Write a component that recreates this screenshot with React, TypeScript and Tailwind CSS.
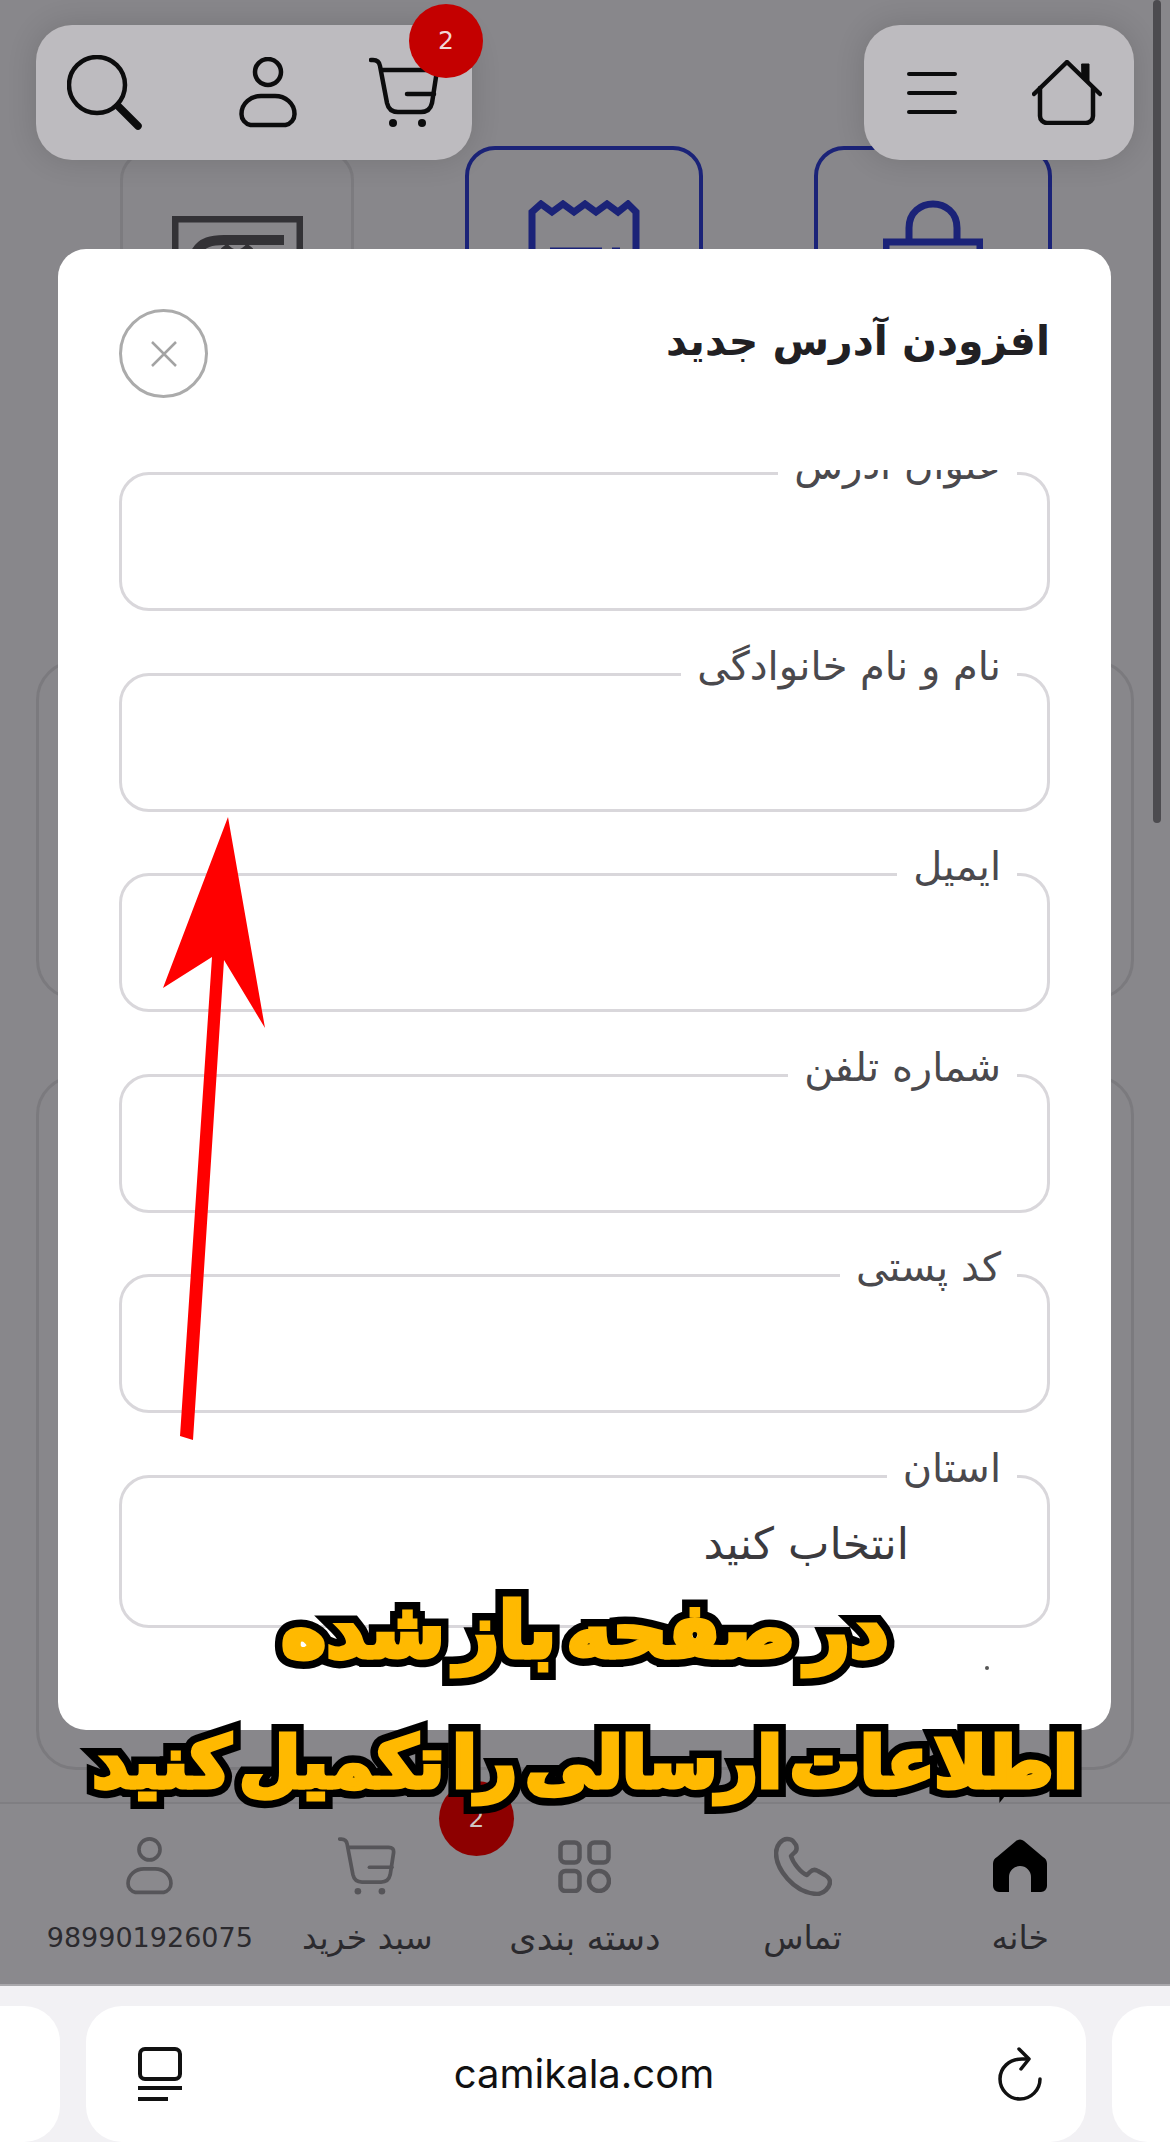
import React from "react";

const persian = "font-['DejaVu_Sans',sans-serif]";

type IconProps = { className?: string };

const SearchIcon: React.FC<IconProps> = ({ className }) => (
  <svg viewBox="0 0 75 75" fill="none" stroke="currentColor" className={className}>
    <circle cx="30" cy="30" r="28" strokeWidth="4.5" />
    <path d="M51 51 L71 71" strokeWidth="7.5" strokeLinecap="round" />
  </svg>
);

const UserIcon: React.FC<IconProps> = ({ className }) => (
  <svg viewBox="0 0 58 71" fill="none" stroke="currentColor" strokeWidth="4.5" className={className}>
    <circle cx="29" cy="15" r="13" />
    <path d="M2.5 57 C2.5 46 12 39 22 39 H36 C46 39 55.5 46 55.5 57 a11 11 0 0 1 -9 11 H11.5 a11 11 0 0 1 -9 -11 z" />
  </svg>
);

const CartIcon: React.FC<IconProps> = ({ className }) => (
  <svg viewBox="0 0 70 71" fill="none" stroke="currentColor" strokeWidth="4.5" strokeLinecap="round" className={className}>
    <path d="M2 3 h2 q6 0 7 6 L18 46 q2 9 11 9 H52 q9 0 11 -9 L67 20 q1 -7 -6 -7 H13" />
    <path d="M38 37 H65" />
    <circle cx="24" cy="66" r="4" fill="currentColor" stroke="none" />
    <circle cx="53" cy="66" r="4" fill="currentColor" stroke="none" />
  </svg>
);

const HomeOutline: React.FC<IconProps> = ({ className }) => (
  <svg viewBox="0 0 70 65" fill="none" stroke="currentColor" strokeWidth="4.5" strokeLinecap="round" strokeLinejoin="round" className={className}>
    <path d="M2 34 L35 2 L68 34" />
    <path d="M8 28 V56 a7 7 0 0 0 7 7 H54 a7 7 0 0 0 7 -7 V28" />
    <path d="M50 4 H57 V22 L50 15 Z" fill="currentColor" strokeWidth="1" />
  </svg>
);

const GridIcon: React.FC<IconProps> = ({ className }) => (
  <svg viewBox="0 0 53 53" fill="none" stroke="currentColor" strokeWidth="4.5" className={className}>
    <rect x="2.5" y="2.5" width="19" height="20" rx="5" />
    <rect x="31.5" y="2.5" width="19" height="20" rx="5" />
    <rect x="2.5" y="31" width="19" height="20" rx="5" />
    <circle cx="41" cy="41" r="10" />
  </svg>
);

const PhoneIcon: React.FC<IconProps> = ({ className }) => (
  <svg viewBox="0 0 58 60" fill="none" stroke="currentColor" strokeWidth="4.5" strokeLinejoin="round" className={className}>
    <path d="M13 3 C8 3 2 9 2 17 C2 32 19 57 43 58 C50 58 56 51 56 46 C56 43 54 41 51 39 L44 35 C41 33 38 34 36 36 L33 39 C27 37 19 27 17 20 L20 17 C23 15 23 12 22 9 L19 5 C17 3 15 3 13 3 Z" />
  </svg>
);

const HomeSolid: React.FC<IconProps> = ({ className }) => (
  <svg viewBox="0 0 54 54" fill="currentColor" className={className}>
    <path d="M23 2 a6 6 0 0 1 8 0 L50 18 a8 8 0 0 1 4 7 V47 a6 6 0 0 1 -6 6 H38 V38 a11 11 0 0 0 -22 0 V53 H6 a6 6 0 0 1 -6 -6 V25 a8 8 0 0 1 4 -7 Z" />
  </svg>
);

const Field: React.FC<{ label: string; children?: React.ReactNode; tall?: boolean }> = ({ label, children, tall }) => (
  <div className={`relative shrink-0 rounded-[30px] border-[3px] border-[#d9d7db] ${tall ? "h-[153px]" : "h-[139px]"}`}>
    <span className="absolute right-[30px] top-[-39px] bg-white px-[16px] text-[40px] leading-[58px] text-[#4a494d]">
      {label}
    </span>
    {children}
  </div>
);

const navItems = [
  { label: "989901926075", text: "text-[27px]", icon: <UserIcon className="h-[58px] w-[47px] text-[#565559]" /> },
  { label: "سبد خرید", text: "text-[33px]", icon: <CartIcon className="h-[60px] w-[58px] text-[#565559]" /> },
  { label: "دسته بندی", text: "text-[35px]", icon: <GridIcon className="h-[53px] w-[53px] text-[#565559]" /> },
  { label: "تماس", text: "text-[33px]", icon: <PhoneIcon className="h-[60px] w-[58px] text-[#565559]" /> },
  { label: "خانه", text: "text-[33px]", icon: <HomeSolid className="h-[54px] w-[54px] text-black" /> },
];

const fields = ["عنوان آدرس", "نام و نام خانوادگی", "ایمیل", "شماره تلفن", "کد پستی"];

export default function App() {
  return (
    <div className={`relative flex h-[2142px] w-[1170px] flex-col overflow-hidden bg-[#88878b] ${persian}`}>
      {/* page behind the dialog */}
      <main className="h-[1802px] shrink-0 overflow-hidden pt-[146px]">
        <div className="ml-[120px] flex gap-[111px]">
          <div className="mt-[4px] flex h-[396px] w-[234px] justify-center rounded-[30px] border-[3px] border-[#7c7b7f] pt-[63px]">
            <svg viewBox="0 0 131 60" fill="none" stroke="#333236" className="h-[60px] w-[131px]">
              <rect x="3" y="3" width="125" height="80" strokeWidth="7" />
              <path d="M24 36 C30 26 40 24 52 24 H112" strokeWidth="10" />
              <path d="M52 30 C60 40 70 40 78 30" strokeWidth="8" />
            </svg>
          </div>
          <div className="flex h-[400px] w-[238px] justify-center rounded-[30px] border-4 border-[#1b2378] pt-[50px]">
            <svg viewBox="0 0 112 60" fill="none" stroke="#1b2378" strokeWidth="7" className="h-[60px] w-[112px]">
              <path d="M4 60 V12 L13 4 L24 12 L35 4 L46 12 L57 4 L68 12 L79 4 L90 12 L100 4 L108 12 V60" />
              <path d="M22 50 H74 M84 50 H92" strokeWidth="5" />
            </svg>
          </div>
          <div className="flex h-[400px] w-[238px] justify-center rounded-[30px] border-4 border-[#1b2378] pt-[50px]">
            <svg viewBox="0 0 100 60" fill="none" stroke="#1b2378" strokeWidth="7" className="h-[60px] w-[100px]">
              <path d="M26 42 V28 C26 -4 74 -4 74 28 V42" />
              <path d="M3 60 V42 H97 V60" />
            </svg>
          </div>
        </div>
        <div className="mx-[36px] mt-[114px] h-[340px] rounded-[40px] border-[3px] border-[#7b7a7e]" />
        <div className="mx-[36px] mt-[75px] h-[695px] rounded-[40px] border-[3px] border-[#7b7a7e]" />
      </main>

      {/* bottom navigation */}
      <nav className="flex h-[182px] shrink-0 border-t-2 border-[#7f7e82] bg-[#8a898d] px-[41px] pt-[30px]">
        {navItems.map((item) => (
          <div key={item.label} className="flex w-[217.6px] flex-col items-center">
            <div className="flex h-[64px] items-center justify-center">{item.icon}</div>
            <span dir="rtl" className={`mt-[18px] whitespace-nowrap leading-[44px] text-[#2b2a2e] ${item.text}`}>
              {item.label}
            </span>
          </div>
        ))}
      </nav>

      {/* browser bar */}
      <div className="flex h-[158px] shrink-0 items-end gap-[26px] border-t-2 border-[#a9a8ac] bg-[#f2f1f4]">
        <div className="h-[136px] w-[60px] shrink-0 rounded-r-[36px] bg-white" />
        <div className="flex h-[136px] w-[1000px] shrink-0 items-center justify-between rounded-[36px] bg-white pl-[52px] pr-[44px]">
          <svg viewBox="0 0 44 54" fill="none" stroke="#111" strokeWidth="4" className="h-[54px] w-[44px]">
            <rect x="2" y="2" width="40" height="30" rx="5" />
            <path d="M0 41 H44" />
            <path d="M0 52 H30" />
          </svg>
          <span className="mr-[12px] font-['Inter',sans-serif] text-[40px] text-[#111]">camikala.com</span>
          <svg viewBox="0 0 44 54" fill="none" stroke="#111" strokeWidth="3.5" strokeLinecap="round" strokeLinejoin="round" className="h-[54px] w-[44px]">
            <path d="M30 12 H24 C11 12 2 21 2 32 C2 43 11 52 22 52 C33 52 42 43 42 32" />
            <path d="M21 2 L31 12 L23 22" />
          </svg>
        </div>
        <div className="h-[136px] flex-1 rounded-l-[36px] bg-white" />
      </div>

      {/* sticky header pills */}
      <div className="absolute left-[36px] right-[36px] top-[25px] flex justify-between">
        <div className="relative flex h-[135px] w-[436px] items-center rounded-[36px] bg-[#bdbbbf] pl-[31px] shadow-[0_0_30px_rgba(0,0,0,0.14)]">
          <SearchIcon className="h-[75px] w-[75px] text-[#0c0c0d]" />
          <UserIcon className="ml-[97px] h-[71px] w-[58px] text-[#0c0c0d]" />
          <CartIcon className="ml-[72px] h-[71px] w-[70px] text-[#0c0c0d]" />
          <span className="absolute left-[373px] top-[-21px] flex h-[74px] w-[74px] items-center justify-center rounded-full bg-[#c40000] text-[25px] text-[#f2d6d6]">
            2
          </span>
        </div>
        <div className="flex h-[135px] w-[270px] items-center rounded-[36px] bg-[#bdbbbf] pl-[43px] shadow-[0_0_30px_rgba(0,0,0,0.14)]">
          <div className="flex w-[50px] flex-col gap-[15px]">
            <span className="h-[4px] rounded-full bg-[#0c0c0d]" />
            <span className="h-[4px] rounded-full bg-[#0c0c0d]" />
            <span className="h-[4px] rounded-full bg-[#0c0c0d]" />
          </div>
          <HomeOutline className="ml-[75px] h-[65px] w-[70px] text-[#0c0c0d]" />
        </div>
      </div>

      {/* cart badge of the bottom nav */}
      <span className="absolute left-[439px] top-[1781px] flex h-[75px] w-[75px] items-center justify-center rounded-full bg-[#8d0000] text-[25px] text-[#cfc4c4]">
        2
      </span>

      {/* dialog */}
      <div className="absolute left-[58px] top-[249px] flex h-[1481px] w-[1053px] flex-col overflow-hidden rounded-[28px] bg-white px-[61px]">
        <div className="flex h-[221px] shrink-0 items-start justify-between pt-[60px]">
          <div className="flex h-[89px] w-[89px] items-center justify-center rounded-full border-[3px] border-[#ababab]">
            <svg viewBox="0 0 30 30" fill="none" stroke="#a3a3a3" strokeWidth="2.5" className="h-[30px] w-[30px]">
              <path d="M3 3 L27 27 M27 3 L3 27" />
            </svg>
          </div>
          <h2 dir="rtl" className="mt-[2px] text-[41px] font-bold leading-[60px] text-[#212023]">
            افزودن آدرس جدید
          </h2>
        </div>
        <div className="flex flex-1 flex-col gap-[61.5px] overflow-hidden pt-[2px]">
          {fields.map((f) => (
            <Field key={f} label={f} />
          ))}
          <Field label="استان" tall>
            <span dir="rtl" className="absolute right-[138px] top-[38px] text-[44px] leading-[56px] text-[#3b3a3e]">
              انتخاب کنید
            </span>
          </Field>
          <div className="mt-[-23px] flex justify-end pr-[61px]">
            <span className="h-[4px] w-[4px] rounded-full bg-[#555]" />
          </div>
        </div>
      </div>

      {/* scrollbar */}
      <div className="absolute left-[1153px] top-0 h-[823px] w-[8px] rounded-full bg-[#4c4b4f]" />

      {/* red arrow annotation */}
      <svg className="absolute left-[150px] top-[800px] h-[660px] w-[130px]" viewBox="150 800 130 660">
        <polygon points="228,817 265,1028 224,960 193,1440 180,1436 212,957 163,988" fill="#ff0000" />
      </svg>

      {/* yellow caption annotation: black outline underneath, thickened yellow fill on top */}
      <div
        dir="rtl"
        className="absolute left-0 top-[1576px] flex w-full flex-col items-center font-bold [word-spacing:-16px]"
      >
        <span
          data-text="در صفحه باز شده"
          className="relative text-[76px] leading-[110px] text-black [-webkit-text-stroke:20px_#000] before:absolute before:inset-0 before:text-[#ffb900] before:content-[attr(data-text)] before:[-webkit-text-stroke:5px_#ffb900]"
        >
          در صفحه باز شده
        </span>
        <span
          data-text="اطلاعات ارسالی را تکمیل کنید"
          className="relative mt-[22px] text-[70px] leading-[110px] text-black [-webkit-text-stroke:20px_#000] before:absolute before:inset-0 before:text-[#ffb900] before:content-[attr(data-text)] before:[-webkit-text-stroke:5px_#ffb900]"
        >
          اطلاعات ارسالی را تکمیل کنید
        </span>
      </div>
    </div>
  );
}
